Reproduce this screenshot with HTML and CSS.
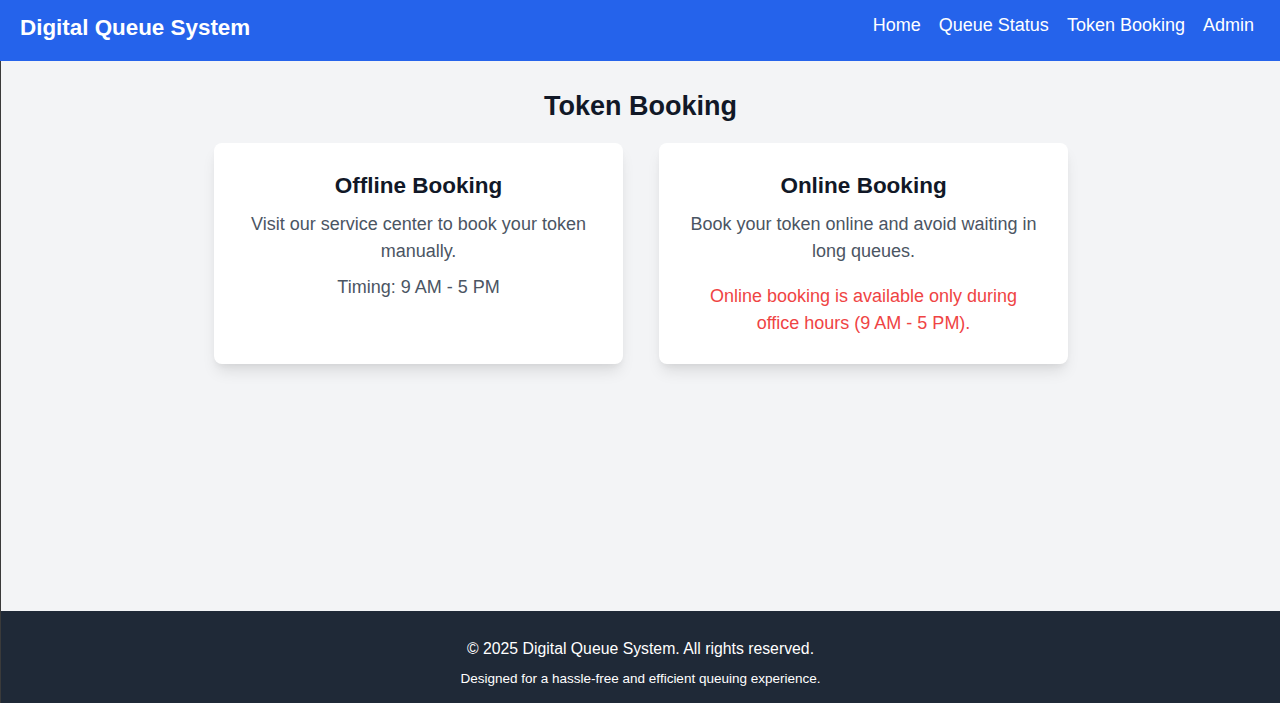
FILE: index.html
```html
<!DOCTYPE html>
<html lang="en">
<head>
<meta charset="utf-8">
<title>Token Booking - Digital Queue System</title>
<link rel="stylesheet" href="styles.css">
</head>
<body>
<div class="page">
  <header class="topbar">
    <div class="brand">Digital Queue System</div>
    <nav class="nav">
      <a href="#">Home</a>
      <a href="#">Queue Status</a>
      <a href="#">Token Booking</a>
      <a href="#">Admin</a>
    </nav>
  </header>
  <main class="main">
    <h1 class="page-title">Token Booking</h1>
    <div class="cards">
      <section class="card">
        <h2 class="card-title">Offline Booking</h2>
        <p class="card-text">Visit our service center to book your token manually.</p>
        <p class="card-text timing">Timing: 9 AM - 5 PM</p>
      </section>
      <section class="card">
        <h2 class="card-title">Online Booking</h2>
        <p class="card-text">Book your token online and avoid waiting in long queues.</p>
        <p class="card-text notice">Online booking is available only during office hours (9 AM - 5 PM).</p>
      </section>
    </div>
  </main>
  <footer class="footer">
    <p class="copy">© 2025 Digital Queue System. All rights reserved.</p>
    <p class="tagline">Designed for a hassle-free and efficient queuing experience.</p>
  </footer>
</div>
</body>
</html>
```

FILE: styles.css
```css
* { box-sizing: border-box; }
html, body { margin: 0; padding: 0; }
body {
  font-family: "Liberation Sans", Arial, sans-serif;
  background: #f3f4f6;
  color: #111827;
}
.page {
  min-height: 100vh;
  display: flex;
  flex-direction: column;
}
.topbar {
  background: #2563eb;
  height: 61px;
  padding: 12px 26px 0 20px;
  display: flex;
  justify-content: space-between;
  align-items: flex-start;
}
.brand {
  color: #fff;
  font-weight: 700;
  font-size: 22.4px;
  line-height: 32px;
}
.nav {
  display: flex;
  gap: 18px;
}
.nav a {
  color: #fff;
  text-decoration: none;
  font-size: 18px;
  line-height: 27px;
}
.main {
  flex: 1;
  border-left: 1px solid #3a3a3a;
  display: flex;
  flex-direction: column;
  align-items: center;
}
.page-title {
  margin: 27px 0 19px;
  font-size: 27px;
  line-height: 36px;
  color: #111827;
}
.cards {
  display: grid;
  grid-template-columns: 409px 409px;
  gap: 36px;
  margin-left: 1px;
}
.card {
  background: #fff;
  border-radius: 8px;
  box-shadow: 0 10px 15px -3px rgba(0,0,0,0.1), 0 4px 6px -2px rgba(0,0,0,0.05);
  padding: 25px 24px 27px;
  text-align: center;
}
.card-title {
  margin: 0 0 7px;
  font-size: 22.5px;
  line-height: 36px;
  font-weight: 700;
  color: #111827;
}
.card-text {
  margin: 0;
  font-size: 18px;
  line-height: 27px;
  color: #4b5563;
}
.timing { margin-top: 9px; }
.notice {
  margin-top: 18px;
  padding: 0 18px;
  color: #ef4444;
}
.footer {
  background: #1f2937;
  border-left: 1px solid #3a3a3a;
  height: 92px;
  padding-top: 27px;
  text-align: center;
  color: #fff;
}
.copy {
  margin: 0;
  font-size: 15.8px;
  line-height: 22px;
}
.tagline {
  margin: 10px 0 0;
  font-size: 13.5px;
  line-height: 18px;
}
```
